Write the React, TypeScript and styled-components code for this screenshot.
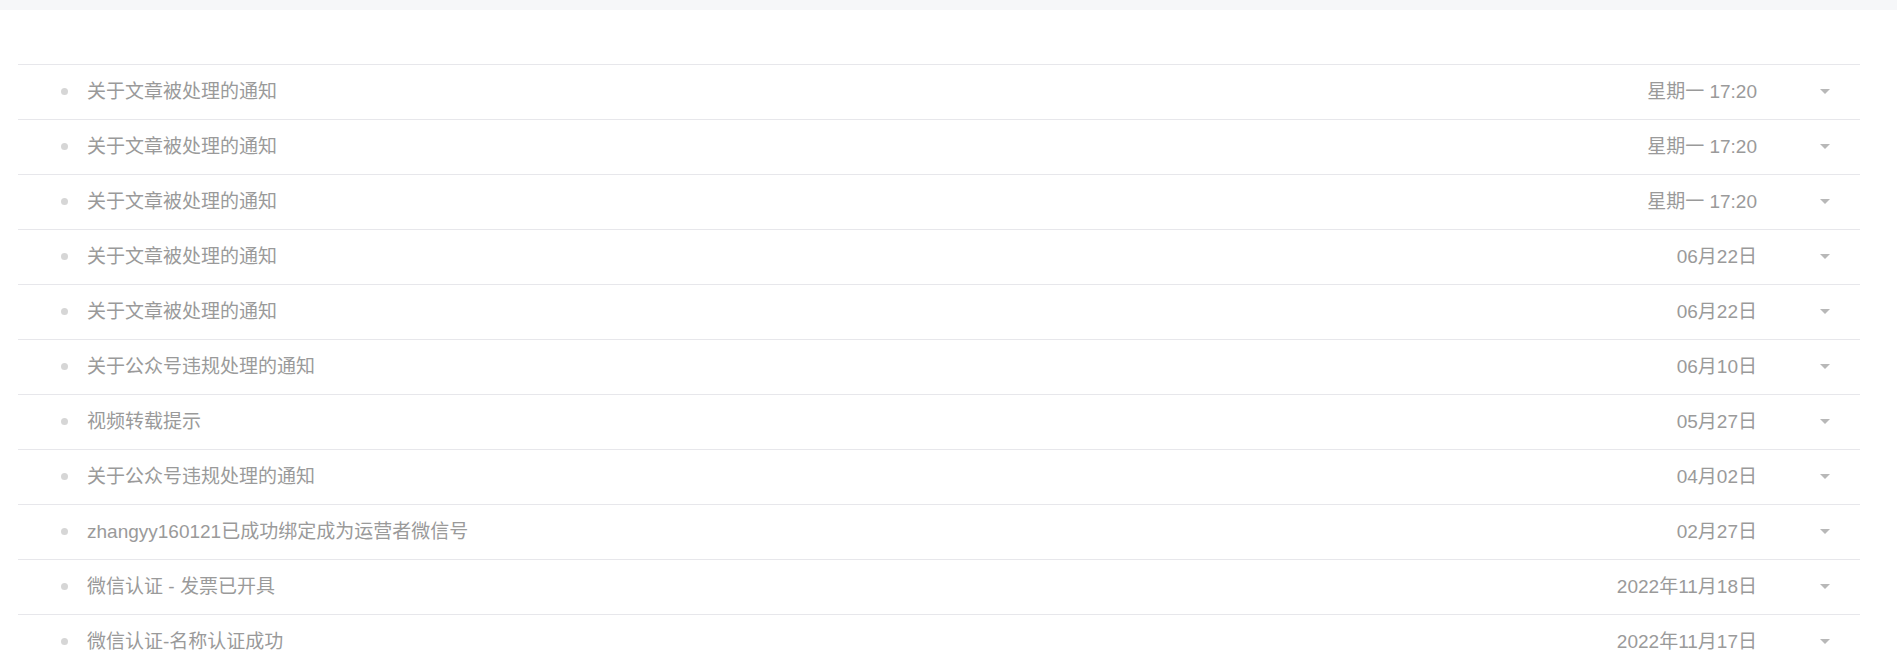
import React from "react";
import styled, { createGlobalStyle } from "styled-components";

const GlobalStyle = createGlobalStyle`
  html, body {
    margin: 0;
    padding: 0;
    background: #ffffff;
    overflow: hidden;
  }
  body {
    font-family: "Liberation Sans", "Noto Sans CJK SC", Arial, sans-serif;
  }
`;

const Page = styled.div`
  display: flex;
  flex-direction: column;
  min-height: 100vh;
`;

const TopBar = styled.div`
  height: 10px;
  background: #f6f7f9;
`;

const Content = styled.div`
  padding: 54px 37px 0 18px;
`;

const List = styled.ul`
  list-style: none;
  margin: 0;
  padding: 0;
`;

const Row = styled.li`
  box-sizing: border-box;
  display: flex;
  align-items: center;
  height: 55px;
  border-top: 1px solid #e7e7eb;
  padding: 0 30px 1px 43px;
  font-size: 19px;
  line-height: 24px;
  color: #9a9a9a;
`;

const Dot = styled.span`
  width: 7px;
  height: 7px;
  border-radius: 50%;
  background: #d6d6d6;
  margin-right: 19px;
  flex: none;
`;

const Title = styled.span`
  flex: 1;
  white-space: nowrap;
  overflow: hidden;
`;

const Time = styled.span`
  white-space: nowrap;
  color: #9a9a9a;
`;

const Caret = styled.span`
  flex: none;
  width: 0;
  height: 0;
  margin-left: 63px;
  border-left: 5.5px solid transparent;
  border-right: 5.5px solid transparent;
  border-top: 5px solid #b8b8b8;
`;

const items: { title: string; time: string }[] = [
  { title: "关于文章被处理的通知", time: "星期一 17:20" },
  { title: "关于文章被处理的通知", time: "星期一 17:20" },
  { title: "关于文章被处理的通知", time: "星期一 17:20" },
  { title: "关于文章被处理的通知", time: "06月22日" },
  { title: "关于文章被处理的通知", time: "06月22日" },
  { title: "关于公众号违规处理的通知", time: "06月10日" },
  { title: "视频转载提示", time: "05月27日" },
  { title: "关于公众号违规处理的通知", time: "04月02日" },
  { title: "zhangyy160121已成功绑定成为运营者微信号", time: "02月27日" },
  { title: "微信认证 - 发票已开具", time: "2022年11月18日" },
  { title: "微信认证-名称认证成功", time: "2022年11月17日" },
];

export default function App() {
  return (
    <Page>
      <GlobalStyle />
      <TopBar />
      <Content>
        <List>
          {items.map((it, i) => (
            <Row key={i}>
              <Dot />
              <Title>{it.title}</Title>
              <Time>{it.time}</Time>
              <Caret />
            </Row>
          ))}
        </List>
      </Content>
    </Page>
  );
}
